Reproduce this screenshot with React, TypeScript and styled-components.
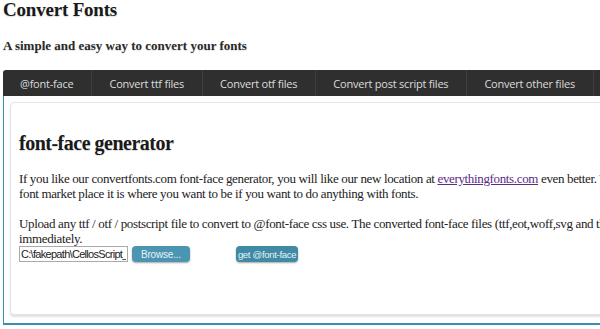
import styled, { createGlobalStyle } from "styled-components";

const GlobalStyle = createGlobalStyle`
	html, body {
		margin: 0;
		padding: 0;
		overflow: hidden;
		background: #fff;
	}
	body {
		font-family: "Liberation Serif", serif;
		color: #222;
	}
`;

const tabs = [
	"@font-face",
	"Convert ttf files",
	"Convert otf files",
	"Convert post script files",
	"Convert other files",
	"Help",
];

export default function App() {
	return (
		<>
			<GlobalStyle />
			<Page>
				<Title>Convert Fonts</Title>
				<Subtitle>A simple and easy way to convert your fonts</Subtitle>
				<TabBar>
					{tabs.map((t) => (
						<Tab key={t}>{t}</Tab>
					))}
				</TabBar>
				<Panel>
					<Card>
						<Heading>font-face generator</Heading>
						<Text>
							If you like our convertfonts.com font-face generator, you will like our
							new location at <Link href="#">everythingfonts.com</Link> even better. You
							will find the largest
							<br />
							font market place it is where you want to be if you want to do anything
							with fonts.
						</Text>
						<Text>
							Upload any ttf / otf / postscript file to convert to @font-face css use.
							The converted font-face files (ttf,eot,woff,svg and the css) are available
							<br />
							immediately.
						</Text>
						<UploadRow>
							<FileInput readOnly value="C:\fakepath\CellosScript_I" />
							<Button>Browse...</Button>
							<Button $compact>get @font-face</Button>
						</UploadRow>
					</Card>
				</Panel>
			</Page>
		</>
	);
}

const Page = styled.div`
	width: 1000px;
	padding: 0 0 0 3px;
`;

const Title = styled.h1`
	margin: 0;
	font-size: 19px;
	line-height: 20px;
	font-weight: bold;
	letter-spacing: -0.2px;
	color: #1a1a1a;
	text-shadow: 0 1px 1px rgba(0, 0, 0, 0.15);
`;

const Subtitle = styled.h2`
	margin: 18px 0 0;
	font-size: 13px;
	line-height: 16px;
	font-weight: bold;
	color: #2a2a2a;
	text-shadow: 0 1px 1px rgba(0, 0, 0, 0.12);
`;

const TabBar = styled.ul`
	display: flex;
	margin: 16px 0 0;
	padding: 0;
	list-style: none;
	height: 26px;
	background: #2f2f2f;
	border-radius: 3px 0 0 0;
`;

const Tab = styled.li`
	display: flex;
	align-items: center;
	padding: 0 18px 0 17px;
	font-family: "Open Sans", sans-serif;
	font-size: 11px;
	letter-spacing: -0.22px;
	color: #dcdcdc;
	border-right: 1px solid #3e3e3e;
`;

const Panel = styled.div`
	border-left: 1px solid #3a8fb7;
	border-bottom: 2px solid #3a8fb7;
	padding: 6px 0 8px 6px;
`;

const Card = styled.div`
	height: 213px;
	box-sizing: border-box;
	padding: 28px 8px 0;
	background: #fff;
	border: 1px solid #e4e4e4;
	border-radius: 4px;
	box-shadow: 0 2px 2px rgba(0, 0, 0, 0.12);
`;

const Heading = styled.h3`
	margin: 0 0 16px;
	font-size: 20px;
	line-height: 24px;
	font-weight: bold;
	letter-spacing: -0.5px;
	color: #1a1a1a;
	text-shadow: 0 1px 1px rgba(0, 0, 0, 0.15);
`;

const Text = styled.p`
	margin: 0 0 15px;
	font-size: 13px;
	line-height: 15px;
	letter-spacing: -0.35px;
	color: #222;
	&:last-of-type {
		margin-bottom: 0;
	}
`;

const Link = styled.a`
	color: #5b2a86;
	text-decoration: underline;
`;

const UploadRow = styled.div`
	display: flex;
	align-items: center;
	gap: 4px;
`;

const FileInput = styled.input`
	width: 109px;
	height: 16px;
	box-sizing: border-box;
	padding: 0 1px;
	font-family: "Liberation Sans", sans-serif;
	font-size: 11px;
	letter-spacing: -0.7px;
	color: #222;
	border: 1px solid #aaa;
	outline: none;
`;

const Button = styled.button<{ $compact?: boolean }>`
	height: 16px;
	padding: 0 ${(p) => (p.$compact ? "2px" : "9px")};
	margin-left: ${(p) => (p.$compact ? "42px" : "0")};
	font-family: "Liberation Sans", sans-serif;
	font-size: ${(p) => (p.$compact ? "9.5px" : "10px")};
	letter-spacing: ${(p) => (p.$compact ? "-0.3px" : "-0.2px")};
	color: #e8f2f6;
	background: ${(p) => (p.$compact ? "#3f8aa5" : "#4c95b2")};
	border: none;
	border-radius: 4px;
	box-shadow: 0 1px 2px rgba(0, 0, 0, 0.35);
`;
